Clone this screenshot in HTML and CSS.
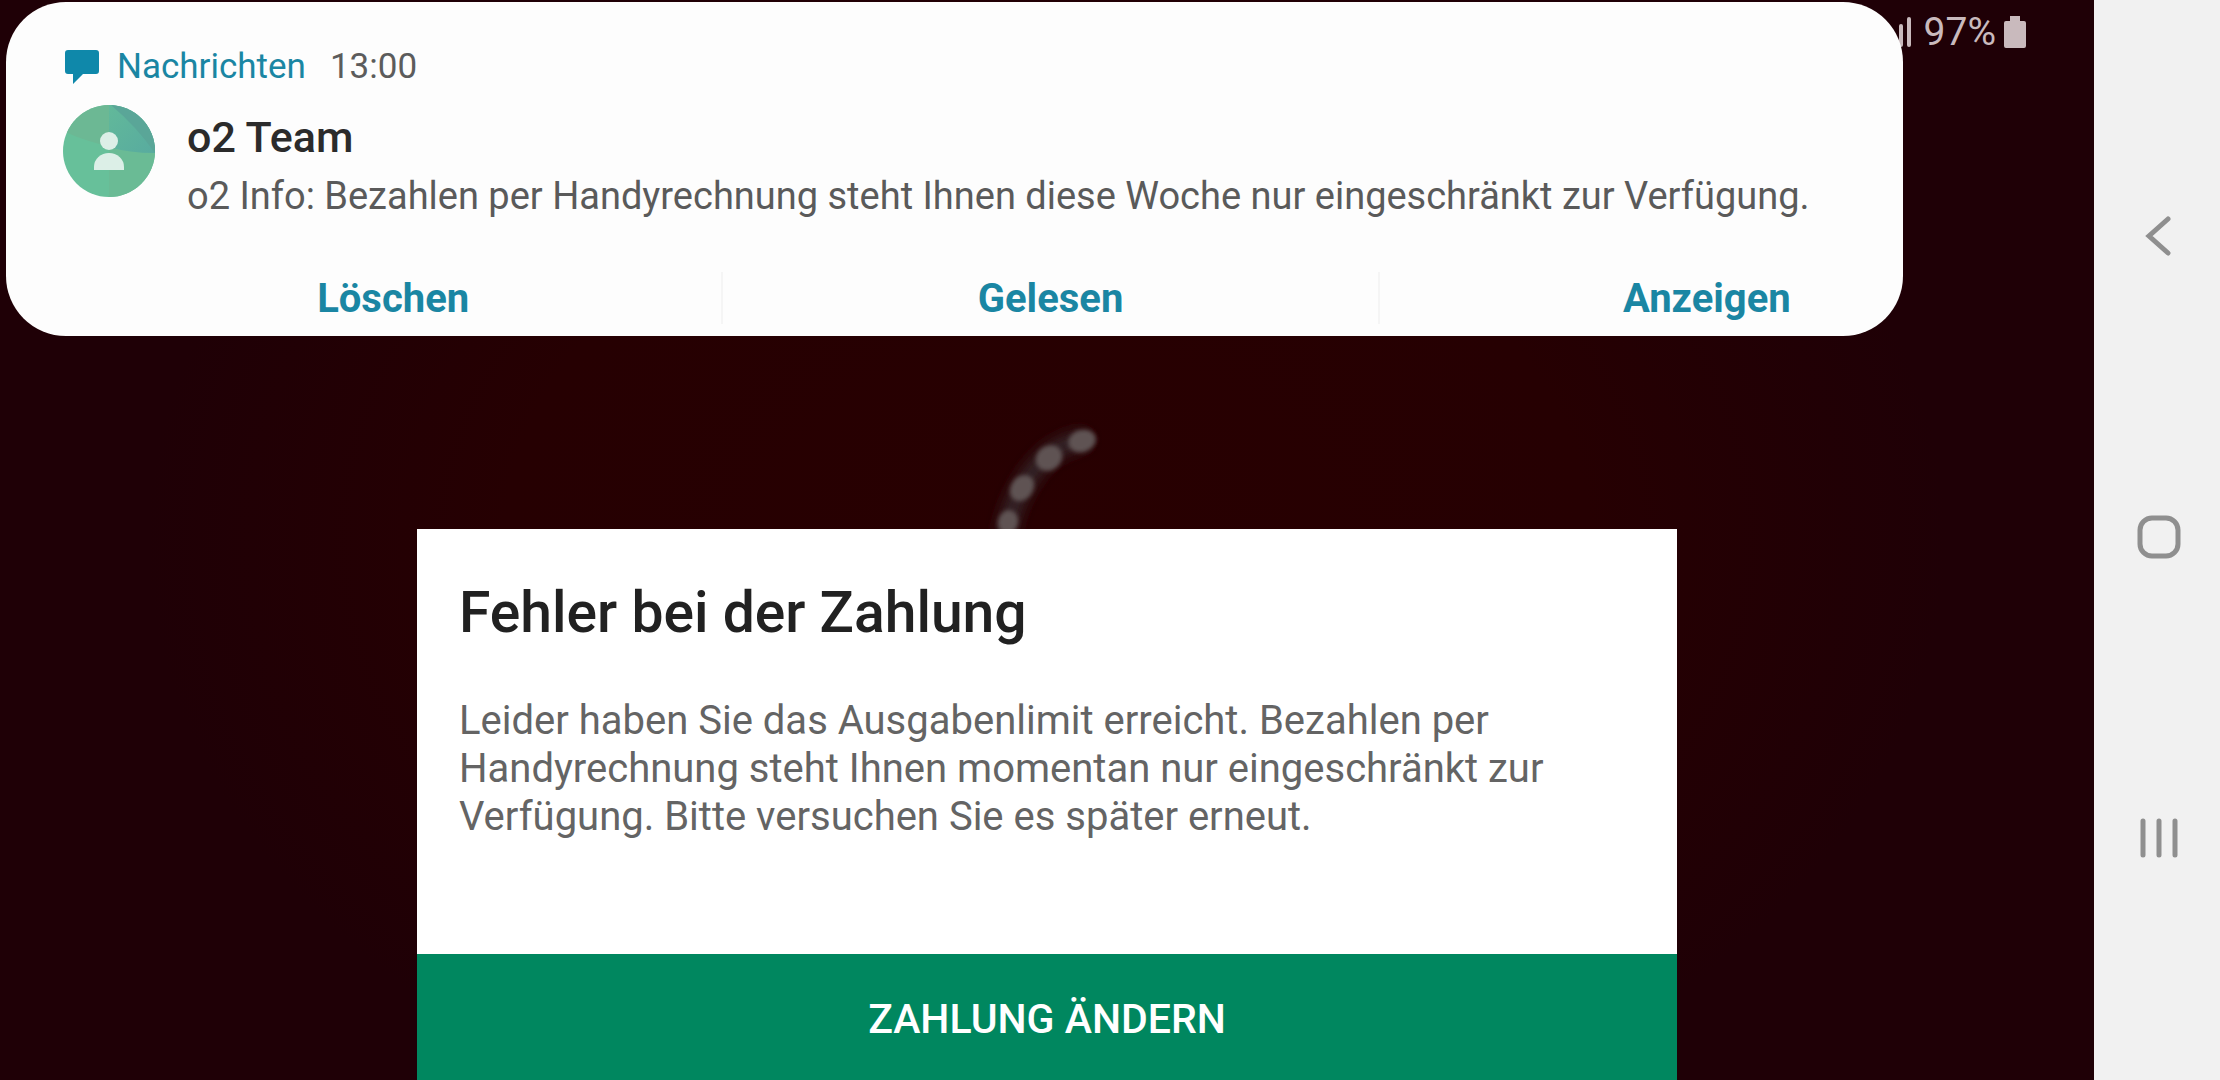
FILE: index.html
```html
<!DOCTYPE html>
<html lang="de">
<head>
<meta charset="utf-8">
<meta name="viewport" content="width=device-width, initial-scale=1">
<title>Fehler bei der Zahlung</title>
<link rel="stylesheet" href="styles.css">
</head>
<body>
<main class="screen">
  <header class="status">
    <svg class="signal" width="32" height="32" viewBox="0 0 32 32" aria-hidden="true">
      <path d="M3 27v2M11 20v9M19 10v19M27 3v26" fill="none" stroke="currentColor" stroke-width="4" stroke-linecap="round"/>
    </svg>
    <span class="level">97%</span>
    <svg width="22" height="34" viewBox="0 0 22 34" aria-hidden="true">
      <path d="M6 1h10v5h4a2 2 0 0 1 2 2v23a2 2 0 0 1-2 2H2a2 2 0 0 1-2-2V8a2 2 0 0 1 2-2h4z" fill="currentColor"/>
    </svg>
  </header>

  <svg class="spinner" viewBox="0 0 200 200" aria-hidden="true">
    <defs>
      <filter id="glow" x="-50%" y="-50%" width="200%" height="200%"><feGaussianBlur stdDeviation="7"/></filter>
      <filter id="soft" x="-50%" y="-50%" width="200%" height="200%"><feGaussianBlur stdDeviation="2"/></filter>
    </defs>
    <path d="M134 40Q104 46 84 74T59 135" fill="none" stroke="#362829" stroke-width="18" stroke-linecap="round" filter="url(#glow)"/>
    <g fill="#5f5252" filter="url(#soft)">
      <ellipse cx="135" cy="41" rx="14" ry="11" transform="rotate(-18 135 41)"/>
      <ellipse cx="102" cy="58" rx="14" ry="12" transform="rotate(-40 102 58)"/>
      <ellipse cx="75" cy="88" rx="14" ry="11" transform="rotate(-55 75 88)"/>
      <ellipse cx="61" cy="122" rx="12" ry="10" transform="rotate(-75 61 122)"/>
    </g>
  </svg>

  <section class="dialog" role="dialog" aria-labelledby="dialog-title">
    <div class="dialog-body">
      <h1 id="dialog-title">Fehler bei der Zahlung</h1>
      <p>Leider haben Sie das Ausgabenlimit erreicht. Bezahlen per Handyrechnung steht Ihnen momentan nur eingeschränkt zur Verfügung. Bitte versuchen Sie es später erneut.</p>
    </div>
    <button class="primary" type="button">ZAHLUNG ÄNDERN</button>
  </section>

  <article class="notification">
    <div class="source">
      <svg width="34" height="34" viewBox="0 0 34 34" aria-hidden="true">
        <path d="M3 0h28a3 3 0 0 1 3 3v18a3 3 0 0 1-3 3H18L8 34V24H3a3 3 0 0 1-3-3V3a3 3 0 0 1 3-3z" fill="#0f88aa"/>
      </svg>
      <span class="app">Nachrichten</span>
      <time>13:00</time>
    </div>
    <div class="message">
      <svg class="avatar" width="92" height="92" viewBox="0 0 92 92" aria-hidden="true">
        <defs>
          <clipPath id="disc"><circle cx="46" cy="46" r="46"/></clipPath>
          <linearGradient id="teal" x1="0" y1="0" x2="1" y2="1"><stop offset="0" stop-color="#62b99a"/><stop offset="1" stop-color="#58ab9f"/></linearGradient>
        </defs>
        <g clip-path="url(#disc)">
          <path d="M0 0h92v92H0z" fill="#67c09a"/>
          <path d="M46 40h46v52H46z" fill="#6abb95"/>
          <path d="M0 0h46v41Q24 37 0 26z" fill="#6cb894"/>
          <path d="M46 0h46v48Q66 48 46 42z" fill="url(#teal)"/>
          <path d="M48 0h44v48Q74 22 48 0z" fill="#5aa698"/>
        </g>
        <circle cx="46" cy="36" r="9" fill="#dcefe7"/>
        <path d="M31 65v-3a15 14 0 0 1 30 0v3z" fill="#dcefe7"/>
      </svg>
      <div class="message-text">
        <h2>o2 Team</h2>
        <p>o2 Info: Bezahlen per Handyrechnung steht Ihnen diese Woche nur eingeschränkt zur Verfügung.</p>
      </div>
    </div>
    <div class="actions">
      <button type="button">Löschen</button>
      <button type="button">Gelesen</button>
      <button type="button">Anzeigen</button>
    </div>
  </article>
</main>

<nav class="navbar" aria-label="Systemnavigation">
  <button type="button" aria-label="Zurück">
    <svg width="44" height="44" viewBox="0 0 44 44" aria-hidden="true"><path d="M31 5L12 22l19 17" fill="none" stroke="currentColor" stroke-width="5" stroke-linecap="round"/></svg>
  </button>
  <button type="button" aria-label="Startbildschirm">
    <svg width="44" height="44" viewBox="0 0 44 44" aria-hidden="true"><rect x="3" y="3" width="38" height="38" rx="12" fill="none" stroke="currentColor" stroke-width="5"/></svg>
  </button>
  <button type="button" aria-label="Letzte Apps">
    <svg width="44" height="44" viewBox="0 0 44 44" aria-hidden="true"><path d="M6 5v34M22 5v34M38 5v34" fill="none" stroke="currentColor" stroke-width="5" stroke-linecap="round"/></svg>
  </button>
</nav>
</body>
</html>
```

FILE: styles.css
```css
* {
  box-sizing: border-box;
}

body {
  margin: 0;
  min-height: 100vh;
  display: flex;
  font-family: Roboto, "Liberation Sans", sans-serif;
}

h1,
h2,
p {
  margin: 0;
}

button {
  margin: 0;
  padding: 0;
  border: 0;
  background: none;
  font-family: inherit;
  cursor: pointer;
}

svg {
  display: block;
  flex: none;
}

.screen {
  position: relative;
  flex: 1;
  min-width: 0;
  display: flex;
  flex-direction: column;
  justify-content: space-between;
  align-items: center;
  overflow: hidden;
  background: radial-gradient(ellipse 900px 640px at 50% 50%, #280001 0%, #260002 60%, #1f0006 100%);
}

/* Status bar */
.status {
  align-self: stretch;
  display: flex;
  justify-content: flex-end;
  align-items: center;
  padding: 12px 68px 0 0;
  color: #c9babd;
}

.level {
  margin: 0 8px 0 10px;
  font-size: 39px;
  line-height: 40px;
}

/* Loading spinner behind the dialog */
.spinner {
  position: absolute;
  top: 400px;
  left: 50%;
  width: 200px;
  height: 200px;
  margin-left: -100px;
}

/* Payment dialog */
.dialog {
  position: relative;
  width: 1260px;
  max-width: 90%;
  background: #fff;
}

.dialog-body {
  padding: 48px 42px 113px;
}

.dialog h1 {
  color: #212121;
  font-size: 57px;
  font-weight: 500;
  line-height: 72px;
}

.dialog p {
  margin-top: 48px;
  color: #646464;
  font-size: 40px;
  line-height: 48px;
}

.primary {
  display: block;
  width: 100%;
  height: 126px;
  padding-top: 4px;
  background: #00875f;
  color: #fff;
  font-size: 41px;
  font-weight: 500;
}

/* Heads-up notification */
.notification {
  position: absolute;
  top: 2px;
  left: 6px;
  right: 191px;
  overflow: hidden;
  padding: 44px 0 12px 57px;
  border-radius: 60px;
  background: #fdfdfd;
}

.source {
  display: flex;
  align-items: center;
  gap: 18px;
  padding-left: 2px;
  color: #5c5c5c;
  font-size: 35px;
  line-height: 42px;
}

.app {
  color: #1a86a3;
}

time {
  margin-left: 6px;
}

.message {
  display: flex;
  gap: 32px;
  margin-top: 16px;
}

.avatar {
  margin-top: 1px;
}

.message-text {
  padding-top: 7px;
}

.message h2 {
  color: #2b2b2b;
  font-size: 43px;
  font-weight: 500;
  line-height: 52px;
}

.message p {
  margin-top: 9px;
  color: #5a5a5a;
  font-size: 38px;
  line-height: 48px;
}

.actions {
  display: grid;
  grid-template-columns: repeat(3, 1fr);
  margin: 52px -131px 0 2px;
}

.actions button {
  height: 52px;
  color: #1a86a3;
  font-size: 40px;
  font-weight: 700;
}

.actions button + button {
  border-left: 2px solid #f5f5f5;
}

/* System navigation */
.navbar {
  flex: none;
  width: 126px;
  display: flex;
  flex-direction: column;
  justify-content: center;
  padding-bottom: 6px;
  background: #f1f1f1;
}

.navbar button {
  flex: 0 1 28%;
  display: flex;
  align-items: center;
  justify-content: center;
  padding-left: 4px;
  color: #8f8f8f;
}
```
